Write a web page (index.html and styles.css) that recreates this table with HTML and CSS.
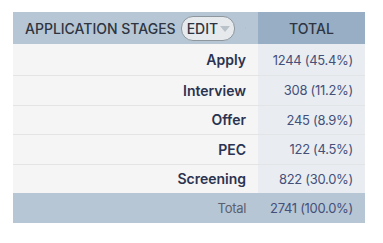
FILE: index.html
```html
<!DOCTYPE html>
<html>
<head>
<meta charset="utf-8">
<link rel="stylesheet" href="styles.css">
</head>
<body>
<table class="pivot">
  <colgroup><col class="col-stage"><col class="col-total"></colgroup>
  <thead>
    <tr>
      <th class="stage-head">
        <div class="head-inner">
          <span class="head-label">APPLICATION STAGES</span>
          <span class="edit-btn">EDIT<svg class="caret" width="10" height="6" viewBox="0 0 10 6"><path d="M0 0H10L5 6Z" fill="#b9c1c9"/></svg></span>
          <svg class="sort" width="9" height="15" viewBox="0 0 9 15"><path d="M4.5 0L9 6.5H0Z" fill="#2b4c7e"/><path d="M0 8.5H9L4.5 15Z" fill="#ffffff"/></svg>
        </div>
      </th>
      <th class="total-head">TOTAL</th>
    </tr>
  </thead>
  <tbody>
    <tr><td class="label">Apply</td><td class="value">1244 (45.4%)</td></tr>
    <tr><td class="label">Interview</td><td class="value">308 (11.2%)</td></tr>
    <tr><td class="label">Offer</td><td class="value">245 (8.9%)</td></tr>
    <tr><td class="label">PEC</td><td class="value">122 (4.5%)</td></tr>
    <tr><td class="label">Screening</td><td class="value">822 (30.0%)</td></tr>
  </tbody>
  <tfoot>
    <tr><td class="foot-label">Total</td><td class="foot-value">2741 (100.0%)</td></tr>
  </tfoot>
</table>
</body>
</html>
```
FILE: styles.css
```css
html, body { margin: 0; padding: 0; background: #ffffff; }
body { padding: 12px 0 0 13px; font-family: Inter, "Liberation Sans", sans-serif; color: #2b3350; }
.pivot { border-collapse: collapse; table-layout: fixed; width: 352px; font-size: 13px; }
.col-stage { width: 245px; }
.col-total { width: 107px; }
.pivot th, .pivot td { padding: 0 12px; white-space: nowrap; }
thead th { height: 32px; font-weight: 500; font-size: 14px; color: #2f3540; }
.stage-head { background: #b6c6d4; text-align: left; padding-left: 12px; padding-right: 6px; }
.head-inner { display: flex; align-items: center; }
.edit-btn { display: inline-flex; align-items: center; gap: 2px; margin-left: 5px; height: 23px; padding: 0 4px 0 5px; border: 1px solid #8e969e; border-radius: 12px; background: #e6eaed; font-size: 14px; color: #2f3540; }
.caret { margin-top: 1px; }
.sort { margin-left: 10px; }
.total-head { background: #97aec4; text-align: center; }
tbody td { height: 28.5px; border-top: 1px solid #e2e4e6; }
tbody tr:first-child td { border-top: none; height: 31px; }
.label { background: #f5f5f5; text-align: right; font-weight: 600; font-size: 14px; color: #2b3350; }
.value { background: #e9edf1; text-align: right; color: #45507a; letter-spacing: -0.3px; font-weight: 400; }
tfoot td { height: 30px; background: #b6c6d4; text-align: right; color: #45507a; letter-spacing: -0.3px; }
.foot-label { color: #5a6070; }
```
